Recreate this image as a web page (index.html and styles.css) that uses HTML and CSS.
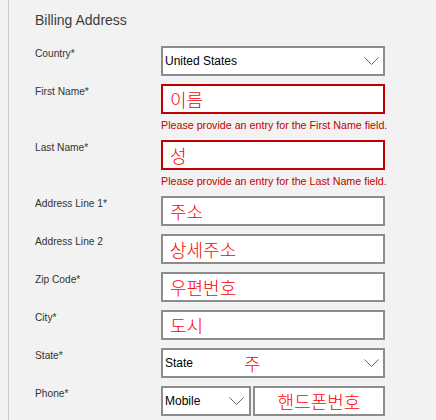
FILE: index.html
```html
<!DOCTYPE html>
<html lang="ko">
<head>
  <meta charset="UTF-8">
  <title>Billing Address</title>
  <meta name="viewport" content="width=device-width, initial-scale=1">
  <link rel="stylesheet" href="styles.css">
</head>
<body>
  <div class="panel">
    <h2 class="title">Billing Address</h2>

    <div class="form">
      <div class="row">
        <label>Country*</label>
        <div class="field">
          <div class="select">
            <span>United States</span>
            <svg class="chevron" width="15" height="8" viewBox="0 0 15 8"><polyline points="0.5,0.5 7.5,7.5 14.5,0.5" /></svg>
          </div>
        </div>
      </div>

      <div class="row">
        <label for="firstName">First Name*</label>
        <div class="field">
          <input type="text" id="firstName" class="invalid" value="이름">
          <div class="error">Please provide an entry for the First Name field.</div>
        </div>
      </div>

      <div class="row">
        <label for="lastName">Last Name*</label>
        <div class="field">
          <input type="text" id="lastName" class="invalid" value="성">
          <div class="error">Please provide an entry for the Last Name field.</div>
        </div>
      </div>

      <div class="row">
        <label for="addr1">Address Line 1*</label>
        <div class="field"><input type="text" id="addr1" value="주소"></div>
      </div>

      <div class="row">
        <label for="addr2">Address Line 2</label>
        <div class="field"><input type="text" id="addr2" value="상세주소"></div>
      </div>

      <div class="row">
        <label for="zip">Zip Code*</label>
        <div class="field"><input type="text" id="zip" value="우편번호"></div>
      </div>

      <div class="row">
        <label for="city">City*</label>
        <div class="field"><input type="text" id="city" value="도시"></div>
      </div>

      <div class="row">
        <label>State*</label>
        <div class="field">
          <div class="select">
            <span>State</span>
            <span class="note">주</span>
            <svg class="chevron" width="15" height="8" viewBox="0 0 15 8"><polyline points="0.5,0.5 7.5,7.5 14.5,0.5" /></svg>
          </div>
        </div>
      </div>

      <div class="row">
        <label for="phone">Phone*</label>
        <div class="field phone">
          <div class="select mobile">
            <span>Mobile</span>
            <svg class="chevron" width="15" height="8" viewBox="0 0 15 8"><polyline points="0.5,0.5 7.5,7.5 14.5,0.5" /></svg>
          </div>
          <input type="text" id="phone" class="center" value="핸드폰번호">
        </div>
      </div>
    </div>
  </div>
</body>
</html>
```

FILE: styles.css
```css
html, body {
  margin: 0;
  height: 100%;
  overflow: hidden;
}

body {
  background: #f2f2f2;
  font-family: "Liberation Sans", Arial, sans-serif;
  color: #333;
}

.panel {
  margin-left: 8px;
  min-height: 100%;
  border-left: 1px solid #cdcdcd;
  padding: 11px 0 0 26px;
  box-sizing: border-box;
}

.title {
  margin: 0 0 17px;
  font-size: 14px;
  line-height: 18px;
  font-weight: normal;
  color: #3c3c3c;
}

.form {
  display: flex;
  flex-direction: column;
  gap: 8px;
}

.row {
  display: flex;
}

.row label {
  width: 126px;
  flex-shrink: 0;
  padding-top: 2px;
  font-size: 10.2px;
  line-height: 12px;
  color: #333;
}

.field {
  width: 224px;
}

.field.phone {
  display: flex;
  gap: 2px;
}

input {
  display: block;
  width: 100%;
  height: 30px;
  box-sizing: border-box;
  margin: 0;
  border: 2px solid #8c8c8c;
  border-radius: 0;
  background: #fff;
  padding: 0 0 0 7px;
  font-family: "Noto Sans CJK KR", sans-serif;
  font-size: 18px;
  font-weight: 300;
  color: #f00;
  outline: none;
}

input.invalid {
  border-color: #c00000;
}

input.center {
  text-align: center;
  padding: 0;
}

.error {
  margin-top: 5px;
  font-size: 10.7px;
  line-height: 13px;
  white-space: nowrap;
  color: #c00000;
}

.select {
  position: relative;
  display: flex;
  align-items: center;
  justify-content: space-between;
  height: 30px;
  box-sizing: border-box;
  border: 2px solid #8c8c8c;
  background: #fff;
  padding: 0 4px 0 2px;
  font-size: 12px;
  color: #000;
}

.select.mobile {
  width: 90px;
  flex-shrink: 0;
  padding-right: 5px;
}

.chevron polyline {
  fill: none;
  stroke: #666;
  stroke-width: 1;
}

.note {
  position: absolute;
  left: 81px;
  top: 50%;
  transform: translateY(-50%);
  font-family: "Noto Sans CJK KR", sans-serif;
  font-size: 18px;
  font-weight: 300;
  line-height: 1;
  color: #f00;
}
```
